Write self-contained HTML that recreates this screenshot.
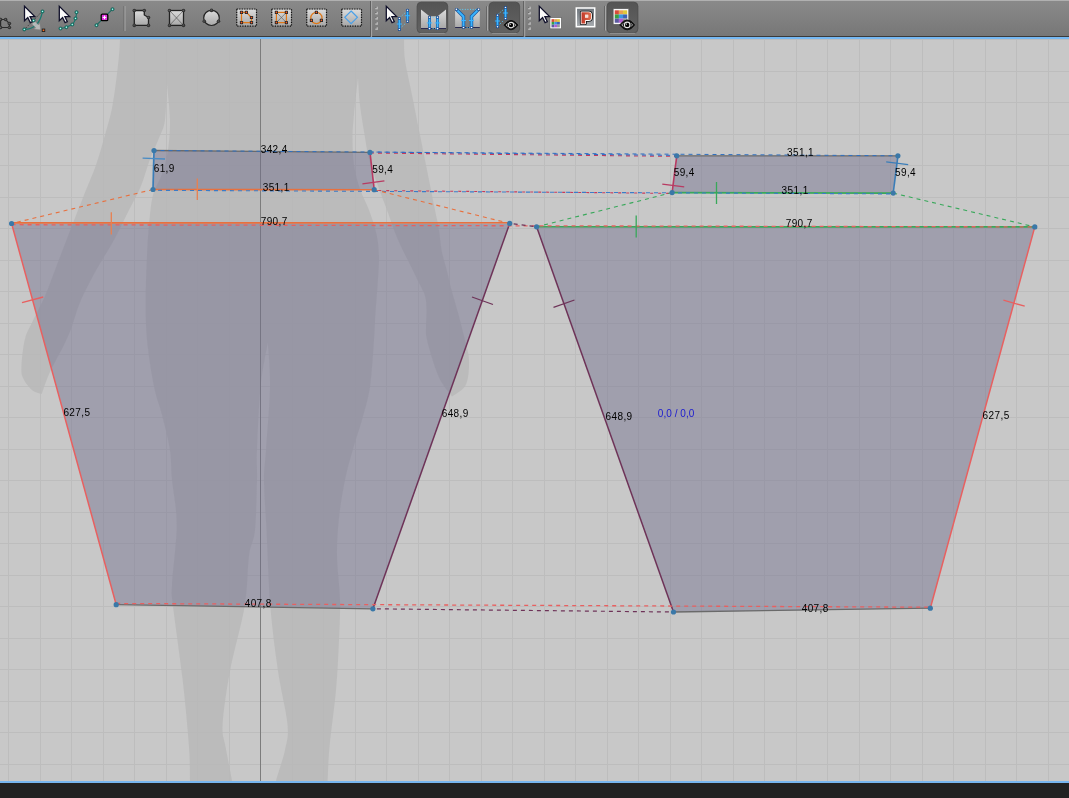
<!DOCTYPE html>
<html><head><meta charset="utf-8"><style>
html,body{margin:0;padding:0;background:#c8c8c8;}
body{width:1069px;height:798px;overflow:hidden;position:relative;}
svg{position:absolute;left:0;top:0;display:block;will-change:transform;}
.lb{font-family:"Liberation Sans",sans-serif;font-size:10px;letter-spacing:0.4px;fill:#000;}
</style></head><body>
<svg width="1069" height="798" viewBox="0 0 1069 798">
<rect x="0" y="0" width="1069" height="798" fill="#c8c8c8"/>
<path d="M8.5 39V781M40.5 39V781M71.5 39V781M103.5 39V781M134.5 39V781M166.5 39V781M197.5 39V781M229.5 39V781M260.5 39V781M292.5 39V781M323.5 39V781M355.5 39V781M386.5 39V781M418.5 39V781M449.5 39V781M481.5 39V781M512.5 39V781M544.5 39V781M575.5 39V781M607.5 39V781M638.5 39V781M670.5 39V781M701.5 39V781M733.5 39V781M764.5 39V781M796.5 39V781M827.5 39V781M859.5 39V781M890.5 39V781M922.5 39V781M953.5 39V781M985.5 39V781M1016.5 39V781M1048.5 39V781M0 39.5H1069M0 71.5H1069M0 102.5H1069M0 134.5H1069M0 165.5H1069M0 197.5H1069M0 228.5H1069M0 260.5H1069M0 291.5H1069M0 323.5H1069M0 354.5H1069M0 386.5H1069M0 417.5H1069M0 449.5H1069M0 480.5H1069M0 512.5H1069M0 543.5H1069M0 575.5H1069M0 606.5H1069M0 638.5H1069M0 669.5H1069M0 701.5H1069M0 732.5H1069M0 764.5H1069" stroke="#bdbdbd" stroke-width="1" fill="none"/>
<path d="M404 30L404.0 30.0C404.0 31.5 403.8 34.0 404.0 39.0C404.2 44.0 403.8 51.5 405.0 60.0C406.2 68.5 408.5 77.5 411.0 90.0C413.5 102.5 417.0 120.0 420.0 135.0C423.0 150.0 426.5 167.5 429.0 180.0C431.5 192.5 433.3 201.7 435.0 210.0C436.7 218.3 437.9 223.2 439.0 230.0C440.1 236.8 440.4 243.9 441.7 250.7C443.0 257.5 445.4 264.8 447.0 271.0C448.6 277.2 449.2 281.1 451.0 288.0C452.8 294.9 455.7 304.0 458.0 312.7C460.3 321.4 463.2 332.1 465.0 340.0C466.8 347.9 468.8 352.6 469.0 360.0C469.2 367.4 468.8 378.4 466.0 384.5C463.2 390.6 454.3 394.5 452.0 396.5L452.0 396.5C450.5 394.5 445.7 388.9 443.0 384.5C440.3 380.1 438.7 377.4 436.0 370.0C433.3 362.6 428.7 347.3 427.0 340.0C425.3 332.7 426.1 331.0 426.0 326.0C425.9 321.0 426.7 315.0 426.5 310.0C426.3 305.0 426.4 300.8 425.0 296.0C423.6 291.2 420.5 286.2 418.0 281.0C415.5 275.8 412.7 270.0 410.0 264.5C407.3 259.0 404.4 253.8 401.7 248.0C399.0 242.2 396.4 236.3 394.0 230.0C391.6 223.7 389.7 217.3 387.0 210.0C384.3 202.7 381.0 194.5 378.0 186.0C375.0 177.5 371.2 167.5 369.0 159.0C366.8 150.5 366.1 144.0 364.6 135.0C363.1 126.0 361.1 114.5 360.0 105.0C358.9 95.5 358.3 82.5 358.0 78.0L358.0 78.0C357.3 84.0 354.9 104.0 354.0 114.0C353.1 124.0 352.5 129.5 352.5 138.0C352.5 146.5 352.8 156.5 354.0 165.0C355.2 173.5 357.5 181.5 360.0 189.0C362.5 196.5 366.2 202.4 369.0 210.0C371.8 217.6 374.9 226.5 376.6 234.4C378.3 242.3 378.8 249.2 379.0 257.6C379.2 266.0 378.2 275.8 377.6 285.0C377.0 294.2 376.1 303.5 375.5 312.7C374.9 321.9 374.9 327.6 374.0 340.0C373.1 352.4 372.0 373.7 370.0 387.0C368.0 400.3 364.8 409.7 362.0 420.0C359.2 430.3 355.8 439.0 353.0 449.0C350.2 459.0 347.3 468.5 345.0 480.0C342.7 491.5 340.3 505.3 339.0 518.0C337.7 530.7 336.8 542.3 337.0 556.0C337.2 569.7 339.7 586.0 340.0 600.0C340.3 614.0 339.7 625.0 339.0 640.0C338.3 655.0 337.6 672.2 336.0 690.0C334.4 707.8 330.9 731.8 329.5 747.0C328.1 762.2 328.0 773.8 327.6 781.0C327.2 788.2 327.1 788.5 327.0 790.0L276.0 790.0C276.0 788.5 274.5 787.7 276.0 781.0C277.5 774.3 283.1 759.4 285.0 750.0C286.9 740.6 288.7 737.7 287.5 724.5C286.3 711.3 280.9 690.8 278.0 671.0C275.1 651.2 272.2 629.5 270.3 606.0C268.4 582.5 267.6 551.0 266.5 530.0C265.4 509.0 264.1 493.3 264.0 480.0C263.9 466.7 265.0 465.6 266.0 450.0C267.0 434.4 269.7 404.5 270.0 386.6C270.3 368.7 268.2 350.1 267.8 342.8L267.8 342.8C266.6 350.1 262.4 368.7 260.6 386.6C258.8 404.5 257.6 434.4 257.0 450.0C256.4 465.6 257.3 466.7 257.0 480.0C256.7 493.3 256.3 517.3 255.0 530.0C253.7 542.7 250.7 543.3 249.0 556.0C247.3 568.7 247.9 586.8 244.7 606.0C241.5 625.2 233.7 651.2 230.0 671.0C226.3 690.8 223.3 711.8 222.6 724.5C221.9 737.2 224.0 737.6 225.6 747.0C227.2 756.4 230.9 773.8 232.0 781.0C233.1 788.2 232.0 788.5 232.0 790.0L190.0 790.0C190.0 788.5 190.2 788.2 190.0 781.0C189.8 773.8 190.2 764.1 189.0 747.0C187.8 729.9 185.2 702.1 182.5 678.6C179.8 655.1 174.8 621.6 173.0 606.0C171.2 590.4 171.4 598.5 172.0 585.0C172.6 571.5 176.7 542.5 176.7 525.0C176.7 507.5 173.2 492.7 172.0 480.0C170.8 467.3 171.5 459.8 169.8 449.0C168.1 438.2 164.6 425.4 162.0 415.0C159.4 404.6 156.5 399.1 154.0 386.6C151.5 374.1 148.4 354.4 147.0 340.0C145.6 325.6 145.7 314.1 145.7 300.0C145.7 285.9 146.4 268.0 147.0 255.5C147.6 243.0 148.0 235.1 149.0 225.0C150.0 214.9 150.8 203.5 153.0 195.0C155.2 186.5 159.5 181.5 162.0 174.0C164.5 166.5 166.7 159.0 168.0 150.0C169.3 141.0 170.2 131.0 170.0 120.0C169.8 109.0 167.5 90.0 167.0 84.0L167.0 84.0C166.7 90.0 166.3 111.0 165.0 120.0C163.7 129.0 161.5 131.5 159.0 138.0C156.5 144.5 153.0 151.0 150.0 159.0C147.0 167.0 144.5 177.5 141.0 186.0C137.5 194.5 133.5 201.0 129.0 210.0C124.5 219.0 119.5 229.9 114.0 240.0C108.5 250.1 101.5 260.5 96.0 270.5C90.5 280.5 84.7 291.8 81.0 300.0C77.3 308.2 75.7 315.0 74.0 320.0C72.3 325.0 72.4 325.8 70.7 330.0C69.0 334.2 66.6 339.7 64.0 345.0C61.4 350.3 57.7 356.7 55.0 362.0C52.3 367.3 50.2 371.3 48.0 376.6C45.8 381.9 42.8 391.1 41.7 394.0L41.7 394.0C40.1 393.3 35.1 392.7 32.0 390.0C28.9 387.3 24.8 382.2 23.0 378.0C21.2 373.8 21.2 371.6 21.5 365.0C21.8 358.4 23.1 346.0 25.0 338.7C26.9 331.4 29.5 328.1 32.8 321.0C36.1 313.9 41.3 304.5 45.0 296.0C48.7 287.5 51.2 280.0 55.0 270.0C58.8 260.0 63.2 248.5 68.0 236.0C72.8 223.5 79.3 206.8 84.0 195.0C88.7 183.2 92.5 175.0 96.0 165.0C99.5 155.0 102.2 145.0 105.0 135.0C107.8 125.0 110.3 117.5 112.6 105.0C114.9 92.5 117.4 71.0 118.6 60.0C119.8 49.0 119.8 44.0 120.0 39.0C120.2 34.0 120.0 31.5 120.0 30.0Z" fill="#b8b8b8" fill-opacity="0.8"/>
<path d="M260.5 39V781" stroke="#7c7c7c" stroke-width="1"/>
<polygon points="154,150.5 370,152.4 374.2,189.7 153,189.5" fill="rgba(110,108,140,0.45)"/>
<polygon points="676.75,155.8 897.9,155.8 893.2,193.1 672.1,192.6" fill="rgba(110,108,140,0.45)"/>
<polygon points="11.6,223.5 509.7,223.4 372.9,608.8 116.2,604.7" fill="rgba(110,108,140,0.45)"/>
<polygon points="536.6,226.8 1034.8,226.9 930.3,608.2 673.5,612" fill="rgba(110,108,140,0.45)"/>
<line x1="154" y1="150.5" x2="370" y2="152.4" stroke="#6a6a6a" stroke-width="1.3"/>
<line x1="676.75" y1="155.8" x2="897.9" y2="155.8" stroke="#6a6a6a" stroke-width="1.3"/>
<line x1="372.9" y1="608.8" x2="116.2" y2="604.7" stroke="#6a6a6a" stroke-width="1.3"/>
<line x1="930.3" y1="608.2" x2="673.5" y2="612" stroke="#6a6a6a" stroke-width="1.3"/>
<line x1="370" y1="152.4" x2="374.2" y2="189.7" stroke="#b83a62" stroke-width="1.6"/>
<line x1="374.2" y1="189.7" x2="153" y2="189.5" stroke="#e8703e" stroke-width="1.6"/>
<line x1="153" y1="189.5" x2="154" y2="150.5" stroke="#3a7db8" stroke-width="1.7"/>
<line x1="897.9" y1="155.8" x2="893.2" y2="193.1" stroke="#3a7db8" stroke-width="1.6"/>
<line x1="893.2" y1="193.1" x2="672.1" y2="192.6" stroke="#38a85a" stroke-width="1.7"/>
<line x1="672.1" y1="192.6" x2="676.75" y2="155.8" stroke="#b83a62" stroke-width="1.6"/>
<line x1="11.6" y1="222.9" x2="509.7" y2="222.8" stroke="#e8703e" stroke-width="1.6"/>
<line x1="509.7" y1="223.4" x2="372.9" y2="608.8" stroke="#6e3358" stroke-width="1.5"/>
<line x1="116.2" y1="604.7" x2="11.6" y2="223.5" stroke="#e86060" stroke-width="1.5"/>
<line x1="536.6" y1="226.8" x2="1034.8" y2="226.9" stroke="#38a85a" stroke-width="1.6"/>
<line x1="1034.8" y1="226.9" x2="930.3" y2="608.2" stroke="#e86060" stroke-width="1.5"/>
<line x1="673.5" y1="612" x2="536.6" y2="226.8" stroke="#6e3358" stroke-width="1.5"/>
<line x1="154" y1="150.5" x2="897.9" y2="155.8" stroke="#3070c0" stroke-width="1.0" stroke-dasharray="4 4" stroke-dashoffset="1.5"/>
<line x1="370" y1="153.0" x2="676.75" y2="156.4" stroke="#c83a5a" stroke-width="1.1" stroke-dasharray="4 4" stroke-dashoffset="0"/>
<line x1="370" y1="152.0" x2="676.75" y2="155.4" stroke="#2a6cc8" stroke-width="1.0" stroke-dasharray="4 4" stroke-dashoffset="0"/>
<line x1="153" y1="190.3" x2="893.2" y2="193.9" stroke="#3a7cc8" stroke-width="1.1" stroke-dasharray="4 4" stroke-dashoffset="3"/>
<line x1="374.2" y1="190.5" x2="672.1" y2="193.4" stroke="#c83a5a" stroke-width="1.1" stroke-dasharray="3 5" stroke-dashoffset="4"/>
<line x1="153" y1="189.5" x2="11.6" y2="223.5" stroke="#e8703e" stroke-width="1.1" stroke-dasharray="4 4" stroke-dashoffset="0"/>
<line x1="374.2" y1="189.7" x2="509.7" y2="223.4" stroke="#e8703e" stroke-width="1.1" stroke-dasharray="4 4" stroke-dashoffset="0"/>
<line x1="672.1" y1="192.6" x2="536.6" y2="226.8" stroke="#38a85a" stroke-width="1.1" stroke-dasharray="4 4" stroke-dashoffset="0"/>
<line x1="893.2" y1="193.1" x2="1034.8" y2="226.9" stroke="#38a85a" stroke-width="1.1" stroke-dasharray="4 4" stroke-dashoffset="0"/>
<line x1="11.6" y1="224.7" x2="1034.8" y2="226.9" stroke="#e86060" stroke-width="1.3" stroke-dasharray="4 4" stroke-dashoffset="0"/>
<line x1="509.7" y1="223.4" x2="536.6" y2="226.8" stroke="#6e3358" stroke-width="1.2" stroke-dasharray="4 4" stroke-dashoffset="4"/>
<line x1="116.2" y1="603.5" x2="930.3" y2="607.2" stroke="#e86060" stroke-width="1.3" stroke-dasharray="4 4" stroke-dashoffset="0"/>
<line x1="372.9" y1="608.8" x2="673.5" y2="612" stroke="#6e3358" stroke-width="1.2" stroke-dasharray="4 4" stroke-dashoffset="4"/>
<line x1="142.6" y1="158.2" x2="165" y2="159" stroke="#4a8cc4" stroke-width="1.3"/>
<line x1="197.3" y1="178.5" x2="197.3" y2="200" stroke="#e88050" stroke-width="1.3"/>
<line x1="362.4" y1="183.9" x2="384.4" y2="180.9" stroke="#b83a62" stroke-width="1.3"/>
<line x1="662.3" y1="184.1" x2="684.2" y2="186.9" stroke="#b83a62" stroke-width="1.3"/>
<line x1="886.2" y1="161.9" x2="908.2" y2="164.6" stroke="#3a7db8" stroke-width="1.3"/>
<line x1="716.5" y1="182" x2="716.5" y2="204" stroke="#38a85a" stroke-width="1.3"/>
<line x1="111.3" y1="212.2" x2="111.3" y2="234.5" stroke="#e88050" stroke-width="1.3"/>
<line x1="22" y1="302.6" x2="43.2" y2="297" stroke="#e86060" stroke-width="1.3"/>
<line x1="472" y1="297" x2="493" y2="304.5" stroke="#6e3358" stroke-width="1.3"/>
<line x1="636.2" y1="215.6" x2="636.2" y2="237.6" stroke="#38a85a" stroke-width="1.3"/>
<line x1="553.5" y1="307.4" x2="574.5" y2="300" stroke="#6e3358" stroke-width="1.3"/>
<line x1="1003.4" y1="300.2" x2="1024.7" y2="306.2" stroke="#e86060" stroke-width="1.3"/>
<circle cx="154" cy="150.5" r="2.6" fill="#3a78a8"/>
<circle cx="370" cy="152.4" r="2.6" fill="#3a78a8"/>
<circle cx="374.2" cy="189.7" r="2.6" fill="#3a78a8"/>
<circle cx="153" cy="189.5" r="2.6" fill="#3a78a8"/>
<circle cx="676.75" cy="155.8" r="2.6" fill="#3a78a8"/>
<circle cx="897.9" cy="155.8" r="2.6" fill="#3a78a8"/>
<circle cx="893.2" cy="193.1" r="2.6" fill="#3a78a8"/>
<circle cx="672.1" cy="192.6" r="2.6" fill="#3a78a8"/>
<circle cx="11.6" cy="223.5" r="2.6" fill="#3a78a8"/>
<circle cx="509.7" cy="223.4" r="2.6" fill="#3a78a8"/>
<circle cx="372.9" cy="608.8" r="2.6" fill="#3a78a8"/>
<circle cx="116.2" cy="604.7" r="2.6" fill="#3a78a8"/>
<circle cx="536.6" cy="226.8" r="2.6" fill="#3a78a8"/>
<circle cx="1034.8" cy="226.9" r="2.6" fill="#3a78a8"/>
<circle cx="930.3" cy="608.2" r="2.6" fill="#3a78a8"/>
<circle cx="673.5" cy="612" r="2.6" fill="#3a78a8"/>
<text x="260.7" y="152.6" class="lb">342,4</text>
<text x="262.7" y="190.79999999999998" class="lb">351,1</text>
<text x="260.7" y="224.6" class="lb">790,7</text>
<text x="153.7" y="171.79999999999998" class="lb">61,9</text>
<text x="372.2" y="172.6" class="lb">59,4</text>
<text x="787.0" y="156.1" class="lb">351,1</text>
<text x="781.6" y="194.2" class="lb">351,1</text>
<text x="785.7" y="226.9" class="lb">790,7</text>
<text x="673.7" y="175.7" class="lb">59,4</text>
<text x="895.0" y="175.6" class="lb">59,4</text>
<text x="63.400000000000006" y="415.5" class="lb">627,5</text>
<text x="441.7" y="417.3" class="lb">648,9</text>
<text x="605.5" y="420.1" class="lb">648,9</text>
<text x="982.6" y="418.5" class="lb">627,5</text>
<text x="244.7" y="607.3000000000001" class="lb">407,8</text>
<text x="801.7" y="611.6" class="lb">407,8</text>
<text x="657.8" y="417.4" class="lb" style="fill:#1a1ad0;letter-spacing:0.05px">0,0 / 0,0</text>
<rect x="0" y="781" width="1069" height="2" fill="#78b6f0"/>
<rect x="0" y="783" width="1069" height="15" fill="#222"/>
<defs><linearGradient id="tbg" x1="0" y1="0" x2="0" y2="1"><stop offset="0" stop-color="#8a8a8a"/><stop offset="1" stop-color="#777777"/></linearGradient><linearGradient id="ig" x1="0" y1="0" x2="0" y2="1"><stop offset="0" stop-color="#dcdcdc"/><stop offset="1" stop-color="#a8a8a8"/></linearGradient><linearGradient id="pb" x1="0" y1="0" x2="0" y2="1"><stop offset="0" stop-color="#545454"/><stop offset="1" stop-color="#626262"/></linearGradient></defs>
<rect x="0" y="0" width="1069" height="36" fill="url(#tbg)"/>
<rect x="0" y="0" width="1069" height="1" fill="#b0b0b0"/>
<rect x="0" y="36" width="1069" height="1" fill="#3a3a3a"/>
<rect x="0" y="37" width="1069" height="2" fill="#76b8f2"/>
<path d="M0 19.5H5.6L9.4 23.5V27.5H0" fill="none" stroke="#2a2a2a" stroke-width="1.2"/>
<line x1="0.6" y1="19.5" x2="0.6" y2="27.5" stroke="#2a2a2a" stroke-width="1.2"/>
<circle cx="0.6" cy="19.5" r="1.8" fill="#333"/><circle cx="0.3" cy="19.2" r="0.5" fill="#888"/>
<circle cx="5.6" cy="19.5" r="1.8" fill="#333"/><circle cx="5.3" cy="19.2" r="0.5" fill="#888"/>
<circle cx="9.4" cy="23.5" r="1.8" fill="#333"/><circle cx="9.1" cy="23.2" r="0.5" fill="#888"/>
<circle cx="9.4" cy="27.5" r="1.8" fill="#333"/><circle cx="9.1" cy="27.2" r="0.5" fill="#888"/>
<circle cx="0.6" cy="27.5" r="1.8" fill="#333"/><circle cx="0.3" cy="27.2" r="0.5" fill="#888"/>
<line x1="26" y1="27.8" x2="41" y2="12.6" stroke="#2a2a2a" stroke-width="1" stroke-dasharray="1 1.5"/>
<path d="M24.3 29.4 Q39 29.4 42.5 11.4" fill="none" stroke="#1a7a70" stroke-width="1.2"/>
<path d="M34.5 21 L38.5 25 L39.8 23.2 L40.5 29.8 L34 29 L35.8 27.8 L32 24Z" fill="#c4c4c4" fill-opacity="0.85" stroke="#8a8a8a" stroke-width="0.4"/>
<polygon points="24.5,6.3 24.5,20.8 27.8,17.6 30.3,22.7 32.5,21.7 30.1,16.6 34.8,16.6" fill="#fafafa" stroke="#10102a" stroke-width="1.3" stroke-linejoin="miter"/>
<circle cx="24.3" cy="29.4" r="1.6" fill="#1f8f80" stroke="#14564e" stroke-width="0.6"/><circle cx="24.3" cy="29.4" r="0.7" fill="#b8fff4"/>
<circle cx="42.5" cy="11.4" r="1.6" fill="#1f8f80" stroke="#14564e" stroke-width="0.6"/><circle cx="42.5" cy="11.4" r="0.7" fill="#b8fff4"/>
<circle cx="33.6" cy="20.5" r="1.6" fill="#1f8f80" stroke="#14564e" stroke-width="0.6"/><circle cx="33.6" cy="20.5" r="0.7" fill="#b8fff4"/>
<rect x="41.8" y="28.6" width="3.4" height="3.4" fill="#222"/><rect x="42.7" y="29.5" width="1.6" height="1.6" fill="#ff6a1a"/>
<path d="M60.5 28.5 Q66 28 72.3 24.5 Q76.5 20 76.5 12.2" fill="none" stroke="#1a7a70" stroke-width="1.2"/>
<polygon points="59.3,6.3 59.3,20.8 62.6,17.6 65.1,22.7 67.3,21.7 64.9,16.6 69.6,16.6" fill="#fafafa" stroke="#10102a" stroke-width="1.3" stroke-linejoin="miter"/>
<circle cx="60.5" cy="28.5" r="1.6" fill="#1f8f80" stroke="#14564e" stroke-width="0.6"/><circle cx="60.5" cy="28.5" r="0.7" fill="#b8fff4"/>
<circle cx="66.4" cy="27.2" r="1.6" fill="#1f8f80" stroke="#14564e" stroke-width="0.6"/><circle cx="66.4" cy="27.2" r="0.7" fill="#b8fff4"/>
<circle cx="72.3" cy="24.5" r="1.6" fill="#1f8f80" stroke="#14564e" stroke-width="0.6"/><circle cx="72.3" cy="24.5" r="0.7" fill="#b8fff4"/>
<circle cx="75.5" cy="18.4" r="1.6" fill="#1f8f80" stroke="#14564e" stroke-width="0.6"/><circle cx="75.5" cy="18.4" r="0.7" fill="#b8fff4"/>
<circle cx="76.5" cy="12.2" r="1.6" fill="#1f8f80" stroke="#14564e" stroke-width="0.6"/><circle cx="76.5" cy="12.2" r="0.7" fill="#b8fff4"/>
<line x1="96.5" y1="25.2" x2="112.5" y2="9.2" stroke="#1a6a60" stroke-width="1.1"/>
<circle cx="96.5" cy="25.2" r="1.6" fill="#1f8f80" stroke="#14564e" stroke-width="0.6"/><circle cx="96.5" cy="25.2" r="0.7" fill="#b8fff4"/>
<circle cx="112.5" cy="9.2" r="1.6" fill="#1f8f80" stroke="#14564e" stroke-width="0.6"/><circle cx="112.5" cy="9.2" r="0.7" fill="#b8fff4"/>
<rect x="101.2" y="14.1" width="6.6" height="6.6" rx="1.2" fill="#e030e0" stroke="#000" stroke-width="1.3"/>
<path d="M104.5 15.6V19.2M102.7 17.4H106.3" stroke="#fff" stroke-width="1"/>
<line x1="124.0" y1="6" x2="124.0" y2="31" stroke="#666" stroke-width="1"/><line x1="125.0" y1="6" x2="125.0" y2="31" stroke="#a8a8a8" stroke-width="1"/>
<path d="M134.3 10.5H144.3V15L148.5 17.5V25.4H134.3Z" fill="url(#ig)" stroke="#222" stroke-width="1.3"/>
<circle cx="134.3" cy="10.5" r="1.8" fill="#333"/><circle cx="134.0" cy="10.2" r="0.5" fill="#888"/>
<circle cx="144.3" cy="10.5" r="1.8" fill="#333"/><circle cx="144.0" cy="10.2" r="0.5" fill="#888"/>
<circle cx="148.5" cy="17.5" r="1.8" fill="#333"/><circle cx="148.2" cy="17.2" r="0.5" fill="#888"/>
<circle cx="148.5" cy="25.4" r="1.8" fill="#333"/><circle cx="148.2" cy="25.099999999999998" r="0.5" fill="#888"/>
<circle cx="134.3" cy="25.4" r="1.8" fill="#333"/><circle cx="134.0" cy="25.099999999999998" r="0.5" fill="#888"/>
<rect x="169.5" y="10.5" width="14" height="14.9" fill="url(#ig)" stroke="#222" stroke-width="1.3"/>
<path d="M169.5 10.5L183.5 25.4M183.5 10.5L169.5 25.4" stroke="#444" stroke-width="0.6"/>
<circle cx="169.5" cy="10.5" r="1.8" fill="#333"/><circle cx="169.2" cy="10.2" r="0.5" fill="#888"/>
<circle cx="183.5" cy="10.5" r="1.8" fill="#333"/><circle cx="183.2" cy="10.2" r="0.5" fill="#888"/>
<circle cx="183.5" cy="25.4" r="1.8" fill="#333"/><circle cx="183.2" cy="25.099999999999998" r="0.5" fill="#888"/>
<circle cx="169.5" cy="25.4" r="1.8" fill="#333"/><circle cx="169.2" cy="25.099999999999998" r="0.5" fill="#888"/>
<ellipse cx="211.5" cy="17.9" rx="7.8" ry="7.6" fill="url(#ig)" stroke="#222" stroke-width="1.2"/>
<circle cx="211.5" cy="10.4" r="1.8" fill="#333"/><circle cx="211.2" cy="10.1" r="0.5" fill="#888"/>
<circle cx="204.3" cy="21.2" r="1.8" fill="#333"/><circle cx="204.0" cy="20.9" r="0.5" fill="#888"/>
<circle cx="218.5" cy="21.2" r="1.8" fill="#333"/><circle cx="218.2" cy="20.9" r="0.5" fill="#888"/>
<rect x="237.2" y="9.5" width="18.8" height="16.2" fill="url(#ig)"/>
<rect x="236.7" y="9" width="19.8" height="17.2" fill="none" stroke="#111" stroke-width="1.2" stroke-dasharray="1.2 1.3"/>
<rect x="272.2" y="9.5" width="18.8" height="16.2" fill="url(#ig)"/>
<rect x="271.7" y="9" width="19.8" height="17.2" fill="none" stroke="#111" stroke-width="1.2" stroke-dasharray="1.2 1.3"/>
<rect x="307.2" y="9.5" width="18.8" height="16.2" fill="url(#ig)"/>
<rect x="306.7" y="9" width="19.8" height="17.2" fill="none" stroke="#111" stroke-width="1.2" stroke-dasharray="1.2 1.3"/>
<rect x="342.2" y="9.5" width="18.8" height="16.2" fill="url(#ig)"/>
<rect x="341.7" y="9" width="19.8" height="17.2" fill="none" stroke="#111" stroke-width="1.2" stroke-dasharray="1.2 1.3"/>
<path d="M241.5 12.4H246.4L251.5 17.5V22.6H241.5Z" fill="none" stroke="#e07818" stroke-width="1.2"/>
<rect x="239.9" y="10.8" width="3.2" height="3.2" rx="0.6" fill="#2a2a2a"/><circle cx="241.5" cy="12.4" r="0.8" fill="#ff5a20"/>
<rect x="244.8" y="10.8" width="3.2" height="3.2" rx="0.6" fill="#2a2a2a"/><circle cx="246.4" cy="12.4" r="0.8" fill="#ff5a20"/>
<rect x="249.9" y="15.9" width="3.2" height="3.2" rx="0.6" fill="#2a2a2a"/><circle cx="251.5" cy="17.5" r="0.8" fill="#ff5a20"/>
<rect x="249.9" y="21.0" width="3.2" height="3.2" rx="0.6" fill="#2a2a2a"/><circle cx="251.5" cy="22.6" r="0.8" fill="#ff5a20"/>
<rect x="239.9" y="21.0" width="3.2" height="3.2" rx="0.6" fill="#2a2a2a"/><circle cx="241.5" cy="22.6" r="0.8" fill="#ff5a20"/>
<path d="M276.4 12.4L286.4 22.6M286.4 12.4L276.4 22.6" stroke="#555" stroke-width="0.6"/>
<rect x="276.4" y="12.4" width="10" height="10.2" fill="none" stroke="#e07818" stroke-width="1.2"/>
<rect x="274.79999999999995" y="10.8" width="3.2" height="3.2" rx="0.6" fill="#2a2a2a"/><circle cx="276.4" cy="12.4" r="0.8" fill="#ff5a20"/>
<rect x="284.79999999999995" y="10.8" width="3.2" height="3.2" rx="0.6" fill="#2a2a2a"/><circle cx="286.4" cy="12.4" r="0.8" fill="#ff5a20"/>
<rect x="284.79999999999995" y="21.0" width="3.2" height="3.2" rx="0.6" fill="#2a2a2a"/><circle cx="286.4" cy="22.6" r="0.8" fill="#ff5a20"/>
<rect x="274.79999999999995" y="21.0" width="3.2" height="3.2" rx="0.6" fill="#2a2a2a"/><circle cx="276.4" cy="22.6" r="0.8" fill="#ff5a20"/>
<circle cx="316.4" cy="18" r="5.6" fill="none" stroke="#e07818" stroke-width="1.2"/>
<rect x="314.79999999999995" y="10.8" width="3.2" height="3.2" rx="0.6" fill="#2a2a2a"/><circle cx="316.4" cy="12.4" r="0.8" fill="#ff5a20"/>
<rect x="309.79999999999995" y="18.799999999999997" width="3.2" height="3.2" rx="0.6" fill="#2a2a2a"/><circle cx="311.4" cy="20.4" r="0.8" fill="#ff5a20"/>
<rect x="319.79999999999995" y="18.799999999999997" width="3.2" height="3.2" rx="0.6" fill="#2a2a2a"/><circle cx="321.4" cy="20.4" r="0.8" fill="#ff5a20"/>
<path d="M351.1 11L357.4 17.3L351.1 23.6L344.8 17.3Z" fill="none" stroke="#4aa0e8" stroke-width="1.2"/>
<line x1="370.6" y1="1" x2="370.6" y2="37" stroke="#5a5a5a" stroke-width="1"/><line x1="371.6" y1="1" x2="371.6" y2="37" stroke="#a8a8a8" stroke-width="1"/>
<rect x="375.3" y="6.7" width="2.6" height="2.6" fill="#bcbcbc"/><rect x="375.3" y="6.7" width="1.2" height="1.2" fill="#5a5a5a"/>
<rect x="375.3" y="11.8" width="2.6" height="2.6" fill="#bcbcbc"/><rect x="375.3" y="11.8" width="1.2" height="1.2" fill="#5a5a5a"/>
<rect x="375.3" y="17.0" width="2.6" height="2.6" fill="#bcbcbc"/><rect x="375.3" y="17.0" width="1.2" height="1.2" fill="#5a5a5a"/>
<rect x="375.3" y="22.2" width="2.6" height="2.6" fill="#bcbcbc"/><rect x="375.3" y="22.2" width="1.2" height="1.2" fill="#5a5a5a"/>
<rect x="375.3" y="27.3" width="2.6" height="2.6" fill="#bcbcbc"/><rect x="375.3" y="27.3" width="1.2" height="1.2" fill="#5a5a5a"/>
<polygon points="386.3,6.3 386.3,20.8 389.6,17.6 392.1,22.7 394.3,21.7 391.9,16.6 396.6,16.6" fill="#fafafa" stroke="#10102a" stroke-width="1.3" stroke-linejoin="miter"/>
<line x1="400.5" y1="17" x2="406.5" y2="11.5" stroke="#5ad0ff" stroke-width="1" stroke-dasharray="1 1.6"/>
<line x1="400.5" y1="28" x2="406.5" y2="22.5" stroke="#5ad0ff" stroke-width="1" stroke-dasharray="1 1.6"/>
<line x1="399.4" y1="18.5" x2="399.4" y2="29.5" stroke="#1a5aa0" stroke-width="3.0" stroke-linecap="round"/>
<line x1="399.4" y1="18.5" x2="399.4" y2="29.5" stroke="#40b8ff" stroke-width="1.7"/>
<line x1="396.79999999999995" y1="24.0" x2="402.0" y2="24.0" stroke="#3ab4ff" stroke-width="1"/>
<circle cx="399.4" cy="18.5" r="1.5" fill="#1a4a90"/><circle cx="399.4" cy="18.5" r="0.8" fill="#fff"/>
<circle cx="399.4" cy="29.5" r="1.5" fill="#1a4a90"/><circle cx="399.4" cy="29.5" r="0.8" fill="#fff"/>
<line x1="407.5" y1="10.2" x2="407.5" y2="21.2" stroke="#1a5aa0" stroke-width="3.0" stroke-linecap="round"/>
<line x1="407.5" y1="10.2" x2="407.5" y2="21.2" stroke="#40b8ff" stroke-width="1.7"/>
<line x1="404.9" y1="15.7" x2="410.1" y2="15.7" stroke="#3ab4ff" stroke-width="1"/>
<circle cx="407.5" cy="10.2" r="1.5" fill="#1a4a90"/><circle cx="407.5" cy="10.2" r="0.8" fill="#fff"/>
<circle cx="407.5" cy="21.2" r="1.5" fill="#1a4a90"/><circle cx="407.5" cy="21.2" r="0.8" fill="#fff"/>
<rect x="417.1" y="2.2" width="30.599999999999966" height="30.6" rx="4" fill="url(#pb)" stroke="#4a4a4a" stroke-width="0.8"/>
<line x1="420.1" y1="33.4" x2="444.7" y2="33.4" stroke="#9a9a9a" stroke-width="0.8"/>
<path d="M421 9.4L429.5 16.2H437.5L446 9.4V28.5H421Z" fill="url(#ig)"/>
<line x1="421" y1="28.5" x2="446" y2="28.5" stroke="#2a2a50" stroke-width="1"/>
<line x1="430" y1="17.3" x2="437" y2="17.3" stroke="#5ad0ff" stroke-width="1" stroke-dasharray="1 1.6"/>
<line x1="430" y1="28.6" x2="437" y2="28.6" stroke="#5ad0ff" stroke-width="1" stroke-dasharray="1 1.6"/>
<line x1="429.5" y1="17.3" x2="429.5" y2="28.6" stroke="#1a5aa0" stroke-width="3.0" stroke-linecap="round"/>
<line x1="429.5" y1="17.3" x2="429.5" y2="28.6" stroke="#40b8ff" stroke-width="1.7"/>
<line x1="426.9" y1="22.950000000000003" x2="432.1" y2="22.950000000000003" stroke="#3ab4ff" stroke-width="1"/>
<circle cx="429.5" cy="17.3" r="1.5" fill="#1a4a90"/><circle cx="429.5" cy="17.3" r="0.8" fill="#fff"/>
<circle cx="429.5" cy="28.6" r="1.5" fill="#1a4a90"/><circle cx="429.5" cy="28.6" r="0.8" fill="#fff"/>
<line x1="437.5" y1="17.3" x2="437.5" y2="28.6" stroke="#1a5aa0" stroke-width="3.0" stroke-linecap="round"/>
<line x1="437.5" y1="17.3" x2="437.5" y2="28.6" stroke="#40b8ff" stroke-width="1.7"/>
<line x1="434.9" y1="22.950000000000003" x2="440.1" y2="22.950000000000003" stroke="#3ab4ff" stroke-width="1"/>
<circle cx="437.5" cy="17.3" r="1.5" fill="#1a4a90"/><circle cx="437.5" cy="17.3" r="0.8" fill="#fff"/>
<circle cx="437.5" cy="28.6" r="1.5" fill="#1a4a90"/><circle cx="437.5" cy="28.6" r="0.8" fill="#fff"/>
<path d="M455.1 9.4L463.5 16.5V27.5H455.1Z" fill="url(#ig)"/><path d="M479.8 9.4L471.5 16.5V27.5H479.8Z" fill="url(#ig)"/>
<line x1="455.1" y1="27.5" x2="479.8" y2="27.5" stroke="#2a2a50" stroke-width="1"/>
<line x1="457" y1="9.4" x2="478" y2="9.4" stroke="#5ad0ff" stroke-width="1" stroke-dasharray="1 1.6"/>
<line x1="464" y1="27.6" x2="471" y2="27.6" stroke="#5ad0ff" stroke-width="1" stroke-dasharray="1 1.6"/>
<path d="M456.4 9.4L463.5 16.5V27.5M478.6 9.4L471.5 16.5V27.5" fill="none" stroke="#1a5aa0" stroke-width="3.4"/>
<path d="M456.4 9.4L463.5 16.5V27.5M478.6 9.4L471.5 16.5V27.5" fill="none" stroke="#3ab4ff" stroke-width="1.9"/>
<path d="M461 20.5H466M469 20.5H474" stroke="#3ab4ff" stroke-width="1"/>
<circle cx="456.4" cy="9.4" r="1.5" fill="#1a4a90"/><circle cx="456.4" cy="9.4" r="0.8" fill="#fff"/>
<circle cx="478.6" cy="9.4" r="1.5" fill="#1a4a90"/><circle cx="478.6" cy="9.4" r="0.8" fill="#fff"/>
<circle cx="463.5" cy="27.5" r="1.5" fill="#1a4a90"/><circle cx="463.5" cy="27.5" r="0.8" fill="#fff"/>
<circle cx="471.5" cy="27.5" r="1.5" fill="#1a4a90"/><circle cx="471.5" cy="27.5" r="0.8" fill="#fff"/>
<line x1="486.5" y1="6.3" x2="486.5" y2="30.6" stroke="#666" stroke-width="1"/><line x1="487.5" y1="6.3" x2="487.5" y2="30.6" stroke="#a8a8a8" stroke-width="1"/>
<rect x="489.2" y="2.2" width="30.400000000000034" height="30.6" rx="4" fill="url(#pb)" stroke="#4a4a4a" stroke-width="0.8"/>
<line x1="492.2" y1="33.4" x2="516.6" y2="33.4" stroke="#9a9a9a" stroke-width="0.8"/>
<line x1="498.5" y1="14" x2="504.5" y2="8.5" stroke="#5ad0ff" stroke-width="1" stroke-dasharray="1 1.6"/>
<line x1="498.5" y1="25.5" x2="504.5" y2="19.5" stroke="#5ad0ff" stroke-width="1" stroke-dasharray="1 1.6"/>
<line x1="497.5" y1="15.3" x2="497.5" y2="26.7" stroke="#1a5aa0" stroke-width="3.0" stroke-linecap="round"/>
<line x1="497.5" y1="15.3" x2="497.5" y2="26.7" stroke="#40b8ff" stroke-width="1.7"/>
<line x1="494.9" y1="21.0" x2="500.1" y2="21.0" stroke="#3ab4ff" stroke-width="1"/>
<circle cx="497.5" cy="15.3" r="1.5" fill="#1a4a90"/><circle cx="497.5" cy="15.3" r="0.8" fill="#fff"/>
<circle cx="497.5" cy="26.7" r="1.5" fill="#1a4a90"/><circle cx="497.5" cy="26.7" r="0.8" fill="#fff"/>
<line x1="505.5" y1="7.5" x2="505.5" y2="18.5" stroke="#1a5aa0" stroke-width="3.0" stroke-linecap="round"/>
<line x1="505.5" y1="7.5" x2="505.5" y2="18.5" stroke="#40b8ff" stroke-width="1.7"/>
<line x1="502.9" y1="13.0" x2="508.1" y2="13.0" stroke="#3ab4ff" stroke-width="1"/>
<circle cx="505.5" cy="7.5" r="1.5" fill="#1a4a90"/><circle cx="505.5" cy="7.5" r="0.8" fill="#fff"/>
<circle cx="505.5" cy="18.5" r="1.5" fill="#1a4a90"/><circle cx="505.5" cy="18.5" r="0.8" fill="#fff"/>
<path d="M504.0 25.1 Q511 15.65 518.0 25.1 Q511 34.550000000000004 504.0 25.1 Z" fill="#111" stroke="#111" stroke-width="1"/>
<path d="M506.2 25.1 L507.6 23.5 M506.2 25.1 L507.6 26.700000000000003 M515.8 25.1 L514.4 23.5 M515.8 25.1 L514.4 26.700000000000003" stroke="#ddd" stroke-width="0.8"/>
<circle cx="511" cy="25.1" r="3.3" fill="#e6e6e6"/><circle cx="511" cy="25.1" r="2.2" fill="#000"/><circle cx="510.2" cy="24.3" r="0.6" fill="#fff"/>
<line x1="523.7" y1="1" x2="523.7" y2="37" stroke="#5a5a5a" stroke-width="1"/><line x1="524.7" y1="1" x2="524.7" y2="37" stroke="#a8a8a8" stroke-width="1"/>
<rect x="528.1999999999999" y="6.7" width="2.6" height="2.6" fill="#bcbcbc"/><rect x="528.1999999999999" y="6.7" width="1.2" height="1.2" fill="#5a5a5a"/>
<rect x="528.1999999999999" y="11.8" width="2.6" height="2.6" fill="#bcbcbc"/><rect x="528.1999999999999" y="11.8" width="1.2" height="1.2" fill="#5a5a5a"/>
<rect x="528.1999999999999" y="17.0" width="2.6" height="2.6" fill="#bcbcbc"/><rect x="528.1999999999999" y="17.0" width="1.2" height="1.2" fill="#5a5a5a"/>
<rect x="528.1999999999999" y="22.2" width="2.6" height="2.6" fill="#bcbcbc"/><rect x="528.1999999999999" y="22.2" width="1.2" height="1.2" fill="#5a5a5a"/>
<rect x="528.1999999999999" y="27.3" width="2.6" height="2.6" fill="#bcbcbc"/><rect x="528.1999999999999" y="27.3" width="1.2" height="1.2" fill="#5a5a5a"/>
<polygon points="539.3,6.3 539.3,20.8 542.6,17.6 545.1,22.7 547.3,21.7 544.9,16.6 549.6,16.6" fill="#fafafa" stroke="#10102a" stroke-width="1.3" stroke-linejoin="miter"/>
<rect x="550" y="17.7" width="11.3" height="11.1" fill="#fff" stroke="#555" stroke-width="0.5"/>
<rect x="551.50" y="19.20" width="2.82" height="2.75" fill="#d84a3a"/>
<rect x="554.27" y="19.20" width="2.82" height="2.75" fill="#e8a050"/>
<rect x="557.03" y="19.20" width="2.82" height="2.75" fill="#e0c83a"/>
<rect x="551.50" y="21.90" width="2.82" height="2.75" fill="#3aa040"/>
<rect x="554.27" y="21.90" width="2.82" height="2.75" fill="#3a98e0"/>
<rect x="557.03" y="21.90" width="2.82" height="2.75" fill="#3a62b8"/>
<rect x="551.50" y="24.60" width="2.82" height="2.75" fill="#5a5aa0"/>
<rect x="554.27" y="24.60" width="2.82" height="2.75" fill="#b060d0"/>
<rect x="557.03" y="24.60" width="2.82" height="2.75" fill="#9a9a9a"/>
<defs><linearGradient id="pg" x1="0" y1="0" x2="0" y2="1"><stop offset="0" stop-color="#6e757c"/><stop offset="1" stop-color="#a8acb0"/></linearGradient><linearGradient id="pr" x1="0" y1="0" x2="1" y2="0"><stop offset="0" stop-color="#c03828"/><stop offset="1" stop-color="#e07050"/></linearGradient></defs>
<rect x="576.3" y="8" width="18.4" height="18.7" fill="url(#pg)" stroke="#fff" stroke-width="1.5"/>
<path d="M581.5 12.3H588.6Q591.2 12.3 591.2 15V17.4Q591.2 20.1 588.6 20.1H585.2V23.4H581.5Z M585 14.8V17.6H588.2V14.8Z" fill="none" stroke="#111" stroke-width="3.2" stroke-linejoin="round"/>
<path d="M581.5 12.3H588.6Q591.2 12.3 591.2 15V17.4Q591.2 20.1 588.6 20.1H585.2V23.4H581.5Z M585 14.8V17.6H588.2V14.8Z" fill="none" stroke="#fff" stroke-width="1.6" stroke-linejoin="round"/>
<path d="M581.5 12.3H588.6Q591.2 12.3 591.2 15V17.4Q591.2 20.1 588.6 20.1H585.2V23.4H581.5Z M585 14.8V17.6H588.2V14.8Z" fill="url(#pr)" fill-rule="evenodd"/>
<rect x="585" y="14.8" width="3.2" height="2.8" fill="#f4e0d8"/>
<line x1="604.5" y1="5.9" x2="604.5" y2="30.5" stroke="#666" stroke-width="1"/><line x1="605.5" y1="5.9" x2="605.5" y2="30.5" stroke="#a8a8a8" stroke-width="1"/>
<rect x="607.1" y="2.2" width="30.799999999999955" height="30.6" rx="4" fill="url(#pb)" stroke="#4a4a4a" stroke-width="0.8"/>
<line x1="610.1" y1="33.4" x2="634.9" y2="33.4" stroke="#9a9a9a" stroke-width="0.8"/>
<rect x="613.2" y="8.8" width="15.5" height="15.4" fill="#fff" stroke="#555" stroke-width="0.5"/>
<rect x="614.70" y="10.30" width="4.22" height="4.18" fill="#d84a3a"/>
<rect x="618.87" y="10.30" width="4.22" height="4.18" fill="#e8a050"/>
<rect x="623.03" y="10.30" width="4.22" height="4.18" fill="#e0c83a"/>
<rect x="614.70" y="14.43" width="4.22" height="4.18" fill="#3aa040"/>
<rect x="618.87" y="14.43" width="4.22" height="4.18" fill="#3a98e0"/>
<rect x="623.03" y="14.43" width="4.22" height="4.18" fill="#3a62b8"/>
<rect x="614.70" y="18.57" width="4.22" height="4.18" fill="#5a5aa0"/>
<rect x="618.87" y="18.57" width="4.22" height="4.18" fill="#b060d0"/>
<rect x="623.03" y="18.57" width="4.22" height="4.18" fill="#9a9a9a"/>
<path d="M619.7 24.9 Q627.2 15.029999999999998 634.7 24.9 Q627.2 34.769999999999996 619.7 24.9 Z" fill="#111" stroke="#111" stroke-width="1"/>
<path d="M621.9000000000001 24.9 L623.3000000000001 23.299999999999997 M621.9000000000001 24.9 L623.3000000000001 26.5 M632.5 24.9 L631.1 23.299999999999997 M632.5 24.9 L631.1 26.5" stroke="#ddd" stroke-width="0.8"/>
<circle cx="627.2" cy="24.9" r="3.3" fill="#e6e6e6"/><circle cx="627.2" cy="24.9" r="2.2" fill="#000"/><circle cx="626.4000000000001" cy="24.099999999999998" r="0.6" fill="#fff"/>
</svg>
</body></html>
